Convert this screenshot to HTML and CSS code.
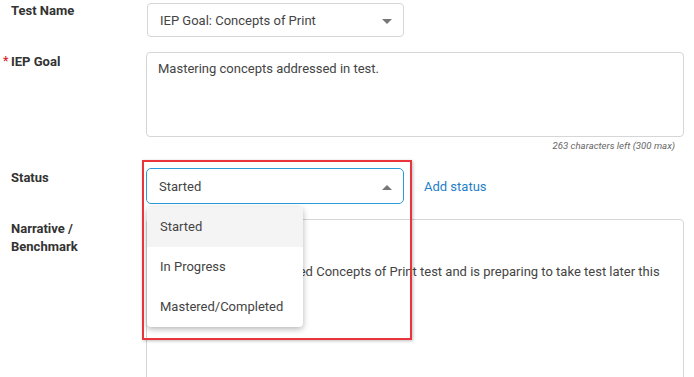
FILE: index.html
```html
<!DOCTYPE html>
<html lang="en">
<head>
    <meta charset="UTF-8">
    <meta name="viewport" content="width=device-width, initial-scale=1.0">
    <title>Test Goal Status</title>
    <link rel="stylesheet" href="styles.css">
</head>
<body>
    <div class="form">
        <div class="row row-first">
            <div class="label label-top">Test Name</div>
            <div class="field">
                <div class="select">
                    <span>IEP Goal: Concepts of Print</span>
                    <span class="caret caret-down"></span>
                </div>
            </div>
        </div>

        <div class="row">
            <div class="label"><span class="req">*</span>IEP Goal</div>
            <div class="field">
                <div class="textarea goal">Mastering concepts addressed in test.</div>
                <div class="counter">263 characters left (300 max)</div>
            </div>
        </div>

        <div class="row">
            <div class="label">Status</div>
            <div class="field field-inline">
                <div class="select-wrap">
                    <div class="select select-open">
                        <span>Started</span>
                        <span class="caret caret-up"></span>
                    </div>
                    <ul class="menu">
                        <li class="menu-item active">Started</li>
                        <li class="menu-item">In Progress</li>
                        <li class="menu-item">Mastered/Completed</li>
                    </ul>
                </div>
                <a href="#" class="add-link">Add status</a>
            </div>
        </div>

        <div class="row">
            <div class="label label-narrative">Narrative /<br>Benchmark</div>
            <div class="field">
                <div class="textarea narrative">Fall<br><br>The student has previewed Concepts of Print test and is preparing to take test later this<br>year.</div>
            </div>
        </div>

        <div class="highlight"></div>
    </div>
</body>
</html>
```

FILE: styles.css
```css
body {
    margin: 0;
    font-family: Roboto, "Liberation Sans", Arial, sans-serif;
    font-size: 13px;
    color: #444;
    background: #fff;
}
.form {
    position: relative;
    padding: 3px 10px 0 0;
}
.row {
    display: flex;
    margin-top: 15px;
}
.row-first {
    margin-top: 0;
}
.label {
    width: 146px;
    flex-shrink: 0;
    box-sizing: border-box;
    padding: 2px 0 0 11px;
    font-weight: bold;
    font-size: 13px;
    line-height: 15px;
    color: #333;
    position: relative;
}
.label-top {
    padding-top: 0;
}
.label-narrative {
    padding-top: 1px;
    line-height: 18px;
}
.req {
    position: absolute;
    left: 3px;
    top: 2px;
    color: #d9262c;
    font-size: 12px;
}
.field {
    flex: 1;
}
.field-inline {
    display: flex;
    align-items: center;
}
.select {
    width: 257px;
    height: 34px;
    box-sizing: border-box;
    border: 1px solid #d6d6d6;
    border-radius: 4px;
    display: flex;
    align-items: center;
    justify-content: space-between;
    padding: 0 11px 0 12px;
    color: #444;
    background: #fff;
    margin-left: 1px;
}
.select-wrap {
    position: relative;
}
.select-open {
    height: 36px;
    border: 1.5px solid #2a9bd9;
    border-radius: 5px;
    margin-left: 0;
    width: 258px;
    padding-left: 12px;
}
.caret {
    width: 0;
    height: 0;
    border-left: 5px solid transparent;
    border-right: 5px solid transparent;
}
.caret-down {
    border-top: 5px solid #777;
    margin-top: 2px;
}
.caret-up {
    border-bottom: 5px solid #777;
    margin-top: 2px;
}
.add-link {
    margin-left: 20px;
    color: #1f80c6;
    text-decoration: none;
    font-size: 13px;
    margin-top: 1px;
}
.textarea {
    box-sizing: border-box;
    border: 1px solid #d6d6d6;
    border-radius: 4px;
    padding: 7px 11px;
    line-height: 18px;
    color: #444;
}
.goal {
    height: 85px;
}
.counter {
    margin-top: 2px;
    text-align: right;
    padding-right: 9px;
    font-size: 9.6px;
    font-style: italic;
    line-height: 14px;
    color: #666;
}
.narrative {
    height: 180px;
}
.menu {
    position: absolute;
    top: 39px;
    left: 1px;
    width: 156px;
    margin: 0;
    padding: 0;
    list-style: none;
    background: #fff;
    border-radius: 4px;
    box-shadow: 0 2px 6px rgba(0, 0, 0, 0.3);
    z-index: 2;
    overflow: hidden;
}
.menu-item {
    height: 40px;
    line-height: 40px;
    padding-left: 13px;
    color: #444;
}
.menu-item.active {
    background: #f4f4f4;
}
.highlight {
    position: absolute;
    left: 142px;
    top: 160px;
    width: 266px;
    height: 176px;
    border: 2px solid #e8353b;
    box-shadow: 1px 1px 3px rgba(0, 0, 0, 0.25);
    z-index: 3;
    pointer-events: none;
}
```
